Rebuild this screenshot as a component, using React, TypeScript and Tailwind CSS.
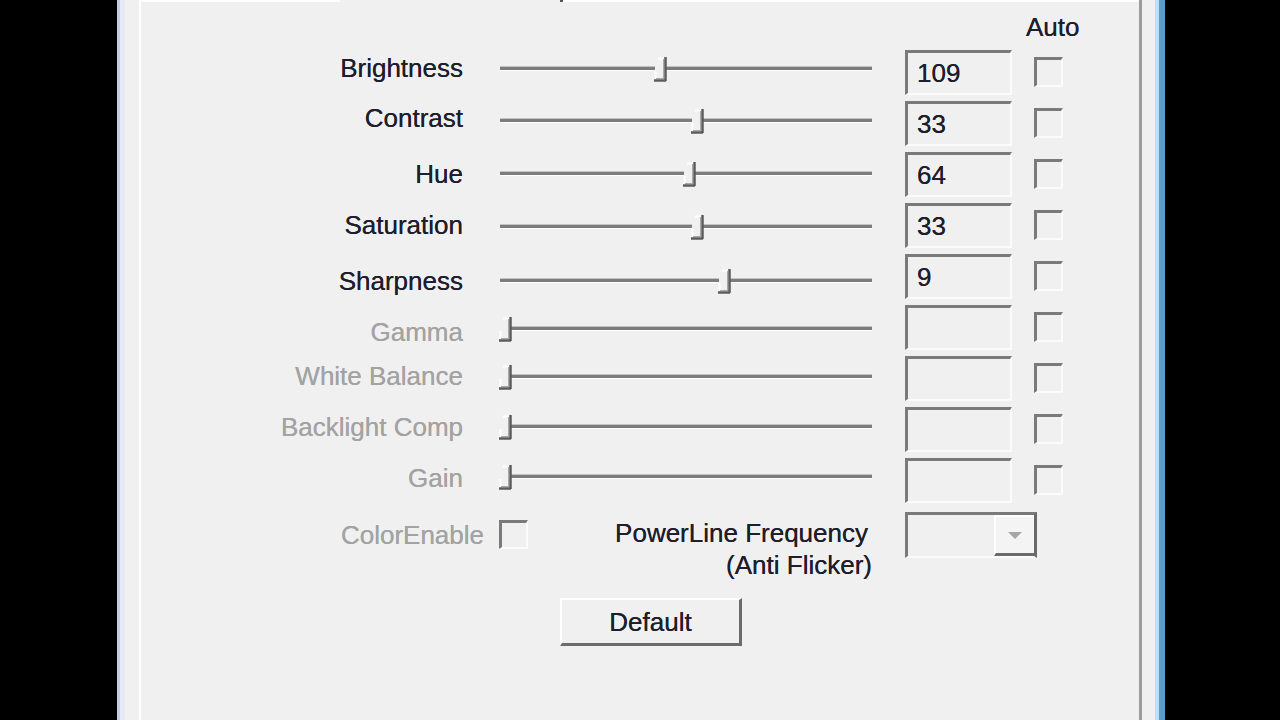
import React from "react";

type Row = {
  label: string;
  value: string;
  thumb: number; // thumb centre, px from track start
  enabled: boolean;
  labelDy: number;
  trackDy: number;
};

const rows: Row[] = [
  { label: "Brightness", value: "109", thumb: 161, enabled: true, labelDy: -5, trackDy: -4 },
  { label: "Contrast", value: "33", thumb: 198, enabled: true, labelDy: -6, trackDy: -3 },
  { label: "Hue", value: "64", thumb: 190, enabled: true, labelDy: -1, trackDy: -1 },
  { label: "Saturation", value: "33", thumb: 198, enabled: true, labelDy: -1, trackDy: 1 },
  { label: "Sharpness", value: "9", thumb: 225, enabled: true, labelDy: 4, trackDy: 4 },
  { label: "Gamma", value: "", thumb: 6, enabled: false, labelDy: 4, trackDy: 1 },
  { label: "White Balance", value: "", thumb: 6, enabled: false, labelDy: -3, trackDy: -2 },
  { label: "Backlight Comp", value: "", thumb: 6, enabled: false, labelDy: -3, trackDy: -3 },
  { label: "Gain", value: "", thumb: 6, enabled: false, labelDy: -3, trackDy: -4 },
];

function Thumb() {
  return (
    <svg width="14" height="26" viewBox="0 0 14 26">
      <rect x="1" y="1" width="11" height="23" fill="#f0f0f0" />
      <path d="M4 1.5 H11 M1.5 14 V23" stroke="#ffffff" strokeWidth="2" />
      <path d="M11.5 0 V24 M0 23.5 H12" stroke="#5c5c5c" strokeWidth="2.5" />
      <path d="M9.5 2 V22 M2 21.5 H10" stroke="#a8a8a8" strokeWidth="1" />
    </svg>
  );
}

function Slider({ thumb, dy }: { thumb: number; dy: number }) {
  return (
    <div className="flex h-[45px] w-[382px] items-center">
      <div className="relative ml-[5px] w-[372px]" style={{ transform: `translateY(${dy}px)` }}>
        <div className="h-[3px] w-full bg-[#7c7c7c] shadow-[0_1px_0_#ffffff,0_-1px_0_#c4c4c4]" />
        <div className="absolute top-[-10px]" style={{ left: thumb - 7 }}>
          <Thumb />
        </div>
      </div>
    </div>
  );
}

function Sunken({ className, children }: { className: string; children?: React.ReactNode }) {
  return (
    <div
      className={`border-t-[3px] border-l-[3px] border-r-2 border-b-2 border-t-[#7a7a7a] border-l-[#7a7a7a] border-r-[#fbfbfb] border-b-[#fbfbfb] bg-[#f0f0f0] ${className}`}
    >
      {children}
    </div>
  );
}

export default function App() {
  const text = "text-[26px] leading-[30px] [text-shadow:0_0_0.4px_currentColor]";
  return (
    <div className="flex h-[720px] w-[1280px] overflow-hidden bg-black font-['Liberation_Sans',Arial,sans-serif]">
      <div className="w-[117px] shrink-0" />
      <div className="flex w-[1048px] shrink-0 bg-[#f0f0f0]">
        <div className="w-[3px] bg-[#c6cbe6]" />
        <div className="w-[5px] bg-[#e7e9f5]" />
        <div className="w-[14px]" />

        {/* tab page */}
        <div className="flex w-[1003px] flex-col border-l-2 border-r-[3px] border-l-white border-r-[#9c9c9c]">
          <div className="flex h-[2px]">
            <div className="w-[199px] bg-white" />
            <div className="w-[220px]" />
            <div className="w-[3px] bg-[#555555]" />
            <div className="flex-1 bg-white" />
          </div>

          <div className="h-[48px] pl-[885px] pt-[10px]">
            <span className={`${text} text-[#1e1e2c]`}>Auto</span>
          </div>

          {rows.map((r) => (
            <div key={r.label} className="flex h-[51px] items-start">
              <div
                className={`flex h-[45px] w-[322px] items-center justify-end ${text} ${
                  r.enabled ? "text-[#1e1e2c]" : "text-[#a3a3a3]"
                }`}
                style={{ transform: `translateY(${r.labelDy}px)` }}
              >
                {r.label}
              </div>
              <div className="ml-[32px]">
                <Slider thumb={r.thumb} dy={r.trackDy} />
              </div>
              <Sunken className="ml-[28px] flex h-[45px] w-[107px] items-center pl-[9px]">
                <span className={`${text} text-[#1e1e2c]`}>{r.value}</span>
              </Sunken>
              <div className="ml-[22px] mt-[7px]">
                <Sunken className="h-[30px] w-[29px]" />
              </div>
            </div>
          ))}

          {/* bottom controls */}
          <div className="flex items-start">
            <div className={`mt-[11px] w-[343px] text-right ${text} text-[#a3a3a3]`}>ColorEnable</div>
            <Sunken className="ml-[15px] mt-[11px] h-[29px] w-[29px]" />
            <div className="mt-[8px] w-[344px] text-right text-[26px] leading-[32px] text-[#1e1e2c] [text-shadow:0_0_0.4px_currentColor]">
              <div className="pr-[4px]">PowerLine Frequency</div>
              <div>(Anti Flicker)</div>
            </div>
            <div className="ml-[33px] mt-[3px] flex h-[46px] w-[132px] border-t-[3px] border-l-[3px] border-r-[3px] border-b-2 border-t-[#7a7a7a] border-l-[#7a7a7a] border-r-[#6a6a6a] border-b-[#fbfbfb] bg-[#f0f0f0]">
              <div className="flex-1" />
              <div className="flex w-[40px] items-center justify-center border-t-2 border-l-2 border-b-[3px] border-t-white border-l-white border-b-[#6a6a6a] bg-[#f4f4f4]">
                <svg width="16" height="9" viewBox="0 0 16 9">
                  <path d="M1 1 H15 L8 8 Z" fill="#a6a6a6" />
                </svg>
              </div>
            </div>
          </div>

          <div className="ml-[419px] mt-[17px]">
            <button className="flex h-[48px] w-[182px] items-center justify-center border-t-2 border-l-2 border-r-[3px] border-b-[3px] border-t-white border-l-white border-r-[#6b6b6b] border-b-[#6b6b6b] bg-[#f0f0f0] text-[26px] leading-[30px] text-[#1e1e2c] [text-shadow:0_0_0.4px_currentColor]">
              Default
            </button>
          </div>
        </div>

        <div className="w-[13px]" />
        <div className="w-[4px] bg-[#b8e2f6]" />
        <div className="w-[6px] bg-[#5a9cc4]" />
      </div>
    </div>
  );
}
